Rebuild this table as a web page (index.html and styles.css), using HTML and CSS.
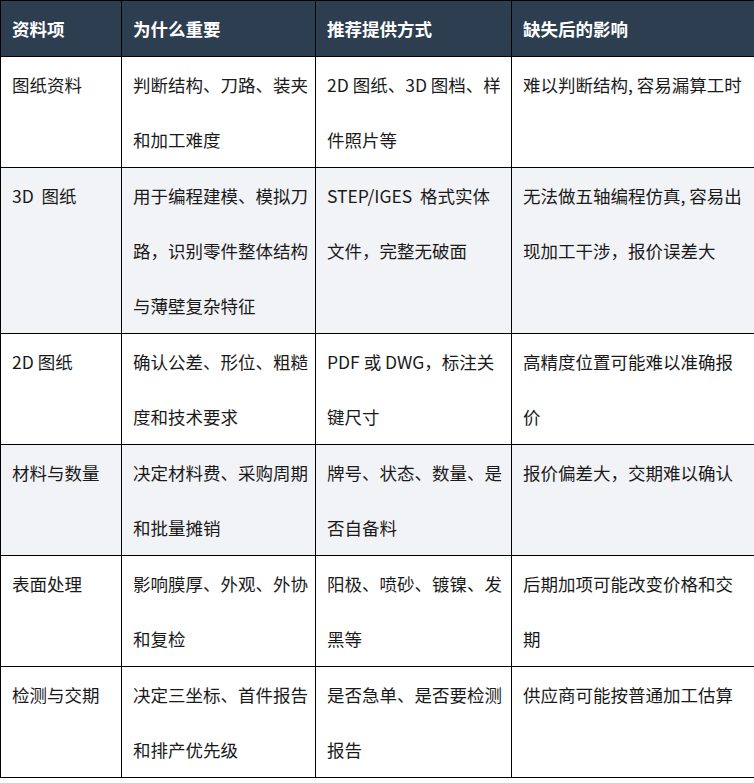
FILE: index.html
```html
<!DOCTYPE html>
<html lang="zh-CN">
<head>
<meta charset="utf-8">
<title>资料项</title>
<link rel="stylesheet" href="styles.css">
</head>
<body>
<table class="info-table">
  <colgroup>
    <col class="c1">
    <col class="c2">
    <col class="c3">
    <col class="c4">
  </colgroup>
  <thead>
    <tr>
      <th>资料项</th>
      <th>为什么重要</th>
      <th>推荐提供方式</th>
      <th>缺失后的影响</th>
    </tr>
  </thead>
  <tbody>
    <tr>
      <td>图纸资料</td>
      <td>判断结构、刀路、装夹和加工难度</td>
      <td>2D 图纸、3D 图档、样件照片等</td>
      <td>难以判断结构, 容易漏算工时</td>
    </tr>
    <tr class="shade">
      <td>3D&nbsp; 图纸</td>
      <td>用于编程建模、模拟刀路，识别零件整体结构与薄壁复杂特征</td>
      <td>STEP/IGES&nbsp; 格式实体文件，完整无破面</td>
      <td>无法做五轴编程仿真, 容易出现加工干涉，报价误差大</td>
    </tr>
    <tr>
      <td>2D 图纸</td>
      <td>确认公差、形位、粗糙度和技术要求</td>
      <td>PDF 或 DWG，标注关键尺寸</td>
      <td>高精度位置可能难以准确报价</td>
    </tr>
    <tr class="shade">
      <td>材料与数量</td>
      <td>决定材料费、采购周期和批量摊销</td>
      <td>牌号、状态、数量、是否自备料</td>
      <td>报价偏差大，交期难以确认</td>
    </tr>
    <tr>
      <td>表面处理</td>
      <td>影响膜厚、外观、外协和复检</td>
      <td>阳极、喷砂、镀镍、发黑等</td>
      <td>后期加项可能改变价格和交期</td>
    </tr>
    <tr>
      <td>检测与交期</td>
      <td>决定三坐标、首件报告和排产优先级</td>
      <td>是否急单、是否要检测报告</td>
      <td>供应商可能按普通加工估算</td>
    </tr>
  </tbody>
</table>
</body>
</html>
```

FILE: styles.css
```css
html, body {
  margin: 0;
  padding: 0;
  background: #ffffff;
}

.info-table {
  width: 754px;
  border-collapse: collapse;
  table-layout: fixed;
  font-family: "Noto Sans CJK SC", "Noto Sans", sans-serif;
  font-size: 17.5px;
  color: #1a1a1a;
}

.c1 { width: 121px; }
.c2 { width: 194px; }
.c3 { width: 196px; }
.c4 { width: 243px; }

.info-table th,
.info-table td {
  border: 1px solid #000000;
  padding: 0 6px 0 11px;
  line-height: 55px;
  text-align: left;
  vertical-align: top;
  word-break: break-all;
}

.info-table th {
  background: #2e3e51;
  color: #ffffff;
  font-weight: 700;
}

.info-table .shade td {
  background: #f2f3f7;
}
```
